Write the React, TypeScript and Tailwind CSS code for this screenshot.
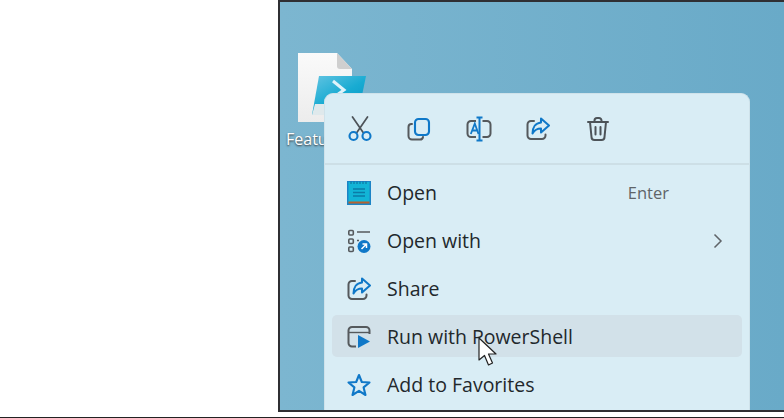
const font = { fontFamily: '"Open Sans", "Noto Sans", sans-serif' };

function Scissors() {
  return (
    <svg width="24" height="26" viewBox="0 0 24 26" fill="none">
      <path d="M4.500 1 L15.500 17 M19.500 1 L8.500 17" stroke="#4d5358" strokeWidth="1.700" strokeLinecap="round" />
      <circle cx="5.500" cy="20" r="4" stroke="#0f78c8" strokeWidth="2.100" />
      <circle cx="18.500" cy="20" r="4" stroke="#0f78c8" strokeWidth="2.100" />
    </svg>
  );
}
function CopyIcon() {
  return (
    <svg width="24" height="24" viewBox="0 0 24 24" fill="none">
      <path d="M5 7 H4.500 A3 3 0 0 0 1.500 10 V19 A3.500 3.500 0 0 0 5 22.500 H13 A3 3 0 0 0 16 20" stroke="#55595c" strokeWidth="2" strokeLinecap="round" />
      <rect x="8" y="2" width="14" height="16" rx="3.500" stroke="#0f78c8" strokeWidth="2.100" />
    </svg>
  );
}
function RenameIcon() {
  return (
    <svg width="26" height="26" viewBox="0 0 26 26" fill="none">
      <path d="M10 5 H5 A3.500 3.500 0 0 0 1.500 8.500 V17.500 A3.500 3.500 0 0 0 5 21 H10" stroke="#55595c" strokeWidth="2" />
      <path d="M16.500 5 H21 A3.500 3.500 0 0 1 24.500 8.500 V17.500 A3.500 3.500 0 0 1 21 21 H16.500" stroke="#55595c" strokeWidth="2" />
      <path d="M4.800 18 L8.800 7.500 L12.500 18 M6.200 14.500 H11.300" stroke="#0f78c8" strokeWidth="1.800" />
      <path d="M10.500 1.500 H16.500 M13.500 1.500 V24.500 M10.500 24.500 H16.500" stroke="#0f78c8" strokeWidth="2" />
    </svg>
  );
}
function ShareIcon() {
  return (
    <svg width="24" height="24" viewBox="0 0 24 24" fill="none">
      <path d="M8 4 H5 A3.500 3.500 0 0 0 1.500 7.500 V18.500 A3.500 3.500 0 0 0 5 22 H16 A3.500 3.500 0 0 0 19.500 18.500 V17.500" stroke="#55595c" strokeWidth="2" strokeLinecap="round" />
      <path d="M15 1.500 L23 8.500 L15 15.500 V11.500 C11 11.500 8.500 13 6.500 16.500 C6.500 10.500 9.500 6 15 5.500 Z" stroke="#0f78c8" strokeWidth="2" strokeLinejoin="round" />
    </svg>
  );
}
function TrashIcon() {
  return (
    <svg width="22" height="24" viewBox="0 0 22 24" fill="none" stroke="#4d5358" strokeWidth="2" strokeLinecap="round">
      <path d="M1 5 H21 M7.500 5 V3.500 A2.500 2.500 0 0 1 10 1 H12 A2.500 2.500 0 0 1 14.500 3.500 V5" />
      <path d="M3 5 L4.500 20 A3 3 0 0 0 7.500 23 H14.500 A3 3 0 0 0 17.500 20 L19 5" />
      <path d="M8.500 10 V17.500 M13.500 10 V17.500" />
    </svg>
  );
}
function NotepadIcon() {
  return (
    <svg width="24" height="24" viewBox="0 0 24 24">
      <rect x="0" y="0" width="24" height="24" fill="#1c84c6" />
      <rect x="1.500" y="1" width="21" height="21" fill="#12b4d6" />
      <rect x="1.500" y="20.500" width="21" height="2" fill="#b5622f" />
      <path d="M6 8 H18 M6 11.500 H18 M6 15 H18" stroke="#0b7ba6" strokeWidth="1.300" />
      <path d="M4 0.500 V3 M7 0.500 V3 M10 0.500 V3 M13 0.500 V3 M16 0.500 V3 M19 0.500 V3" stroke="#0d6a98" strokeWidth="1" />
    </svg>
  );
}
function OpenWithIcon() {
  return (
    <svg width="24" height="24" viewBox="0 0 24 24" fill="none">
      <rect x="1.800" y="1.500" width="4.500" height="4.500" rx="1" stroke="#55595c" strokeWidth="1.600" />
      <rect x="1.800" y="10" width="4.500" height="4.500" rx="1" stroke="#55595c" strokeWidth="1.600" />
      <rect x="1.800" y="18" width="4.500" height="4.500" rx="1" stroke="#55595c" strokeWidth="1.600" />
      <path d="M10 3 H23 M10 11.500 H12" stroke="#55595c" strokeWidth="1.400" />
      <circle cx="17" cy="17.500" r="6.500" fill="#0f78c8" />
      <path d="M14.500 20 L19.500 15 M15.500 15 H19.500 V19" stroke="#fff" strokeWidth="1.500" />
    </svg>
  );
}
function RunIcon() {
  return (
    <svg width="24" height="24" viewBox="0 0 24 24" fill="none">
      <path d="M9 21.500 H5 A3.500 3.500 0 0 1 1.500 18 V5.500 A3.500 3.500 0 0 1 5 2 H19 A3.500 3.500 0 0 1 22.500 5.500 V9" stroke="#55595c" strokeWidth="2" />
      <path d="M2 7.500 H22" stroke="#55595c" strokeWidth="1.400" />
      <path d="M11 10 L23 16.500 L11 23 Z" fill="#0f78c8" />
    </svg>
  );
}
function StarIcon() {
  return (
    <svg width="24" height="24" viewBox="0 0 24 24" fill="none">
      <path d="M12 2 L14.800 9 L22.500 9.500 L16.600 14.400 L18.500 22 L12 17.900 L5.500 22 L7.400 14.400 L1.500 9.500 L9.200 9 Z" stroke="#0f78c8" strokeWidth="2.100" strokeLinejoin="round" />
    </svg>
  );
}
function Chevron() {
  return (
    <svg width="10" height="16" viewBox="0 0 10 16" fill="none">
      <path d="M1.500 1.500 L8 8 L1.500 14.500" stroke="#5f6468" strokeWidth="1.500" />
    </svg>
  );
}
function FileIcon() {
  return (
    <svg width="72" height="72" viewBox="0 0 72 72">
      <defs>
        <linearGradient id="ps" x1="0" y1="0" x2="0.800" y2="1">
          <stop offset="0" stopColor="#63c4e2" />
          <stop offset="0.550" stopColor="#18abd2" />
          <stop offset="1" stopColor="#0796c4" />
        </linearGradient>
        <linearGradient id="pg" x1="0" y1="0" x2="0" y2="1">
          <stop offset="0" stopColor="#fafafa" />
          <stop offset="1" stopColor="#ececec" />
        </linearGradient>
      </defs>
      <path d="M1 1 H40 L55 17 V70 H1 Z" fill="url(#pg)" />
      <path d="M40 1 L55 17 H43 Q40 17 40 14 Z" fill="#cfcfcf" />
      <path d="M22 24 H69 L61 63 H15 Z" fill="url(#ps)" />
      <path d="M18 52 H42 V63 H15 Z" fill="#dfe9ec" />
      <path d="M36 29 L47 38 L37 45" fill="none" stroke="#dff3fa" strokeWidth="3" />
    </svg>
  );
}
function Cursor() {
  return (
    <svg width="22" height="30" viewBox="0 0 22 30">
      <path d="M1 1 V23 L6.500 18.500 L10.500 28 L14.500 26 L10.500 17 L18 17 Z" fill="#fff" stroke="#222" strokeWidth="1.200" strokeLinejoin="round" />
    </svg>
  );
}

function Row({ icon, label, hover, children }: { icon: React.ReactNode; label: string; hover?: boolean; children?: React.ReactNode }) {
  return (
    <div className={`flex h-[42px] items-center rounded-[5px] pl-[15px] pt-[2px] ${hover ? "bg-[#d2e1e9]" : ""}`}>
      <div className="flex w-[24px] shrink-0 items-center justify-center">{icon}</div>
      <span className="ml-[16px] text-[19.500px] leading-none text-[#22282c]">{label}</span>
      {children}
    </div>
  );
}

export default function App() {
  const tools = [<Scissors />, <CopyIcon />, <RenameIcon />, <ShareIcon />, <TrashIcon />];
  return (
    <div className="flex h-[418px] w-[784px] flex-col overflow-hidden bg-white" style={font}>
      <div className="flex h-[412px] shrink-0 pl-[278px]">
        <div className="relative flex-1 overflow-hidden border-y-2 border-l-2 border-[#2f2f33] bg-gradient-to-r from-[#7cb6d0] to-[#69aac8]">
          <div className="absolute left-[17px] top-[50px]">
            <FileIcon />
          </div>
          <span className="absolute left-[6px] top-[127px] text-[16px] leading-5 text-white [text-shadow:0_1px_2px_#333]">Feature</span>

          <div className="absolute left-[44px] top-[91px] w-[426px] rounded-t-[9px] border border-b-0 border-[#cfe2ea] bg-[#d9edf5]">
            <div className="flex h-[71px] items-center border-b-2 border-[#cddfe6] pl-[5px]">
              {tools.map((t, i) => (
                <div key={i} className="flex w-[59.500px] items-center justify-center">{t}</div>
              ))}
            </div>
            <div className="flex h-[253px] flex-col gap-[6px] px-[7px] pt-[6px]">
              <Row icon={<NotepadIcon />} label="Open">
                <span className="ml-auto mr-[73px] text-[16.500px] leading-none text-[#5f6468]">Enter</span>
              </Row>
              <Row icon={<OpenWithIcon />} label="Open with">
                <span className="ml-auto mr-[19px] flex"><Chevron /></span>
              </Row>
              <Row icon={<ShareIcon />} label="Share" />
              <Row icon={<RunIcon />} label="Run with PowerShell" hover />
              <Row icon={<StarIcon />} label="Add to Favorites" />
            </div>
          </div>

          <div className="absolute left-[198px] top-[335px]">
            <Cursor />
          </div>
        </div>
      </div>
      <div className="mt-[5px] h-[1px] w-full bg-[#222]" />
    </div>
  );
}
